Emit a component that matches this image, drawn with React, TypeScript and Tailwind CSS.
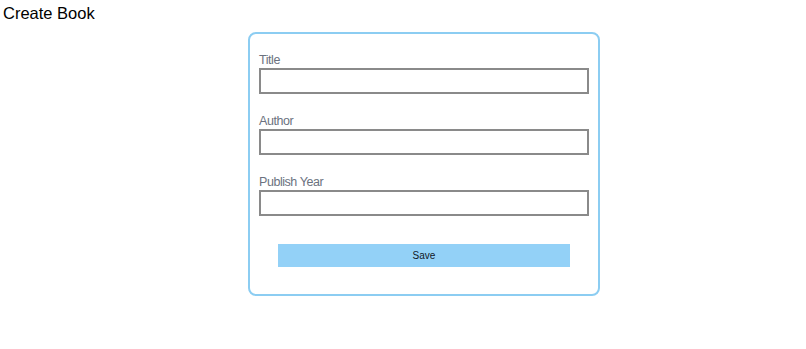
import React from "react";

export default function App() {
  const fields = ["Title", "Author", "Publish Year"];
  return (
    <div className="bg-white w-[806px] h-[349px] font-['Liberation_Sans',sans-serif]">
      <h1 className="text-[16.5px] leading-[24px] text-black pl-[3px] pt-[1px] font-['Liberation_Sans',sans-serif]">Create Book</h1>
      <div className="ml-[248px] mt-[7px] w-[352px] h-[264px] border-2 border-[#8ccdf2] rounded-[8px] pt-[19px] px-[9px]">
        {fields.map((f) => (
          <div key={f} className="mb-[20px] flex flex-col">
            <label className="text-[12.5px] leading-[15px] tracking-[-0.45px] text-[#6b7280]">{f}</label>
            <input className="h-[26px] w-full border-2 border-[#8a8a8a] px-2 outline-none" />
          </div>
        ))}
        <div className="flex justify-center pt-[8px]">
          <button className="w-[292px] h-[23px] bg-[#93d1f7] text-[10px] text-[#111827] font-medium">Save</button>
        </div>
      </div>
    </div>
  );
}
